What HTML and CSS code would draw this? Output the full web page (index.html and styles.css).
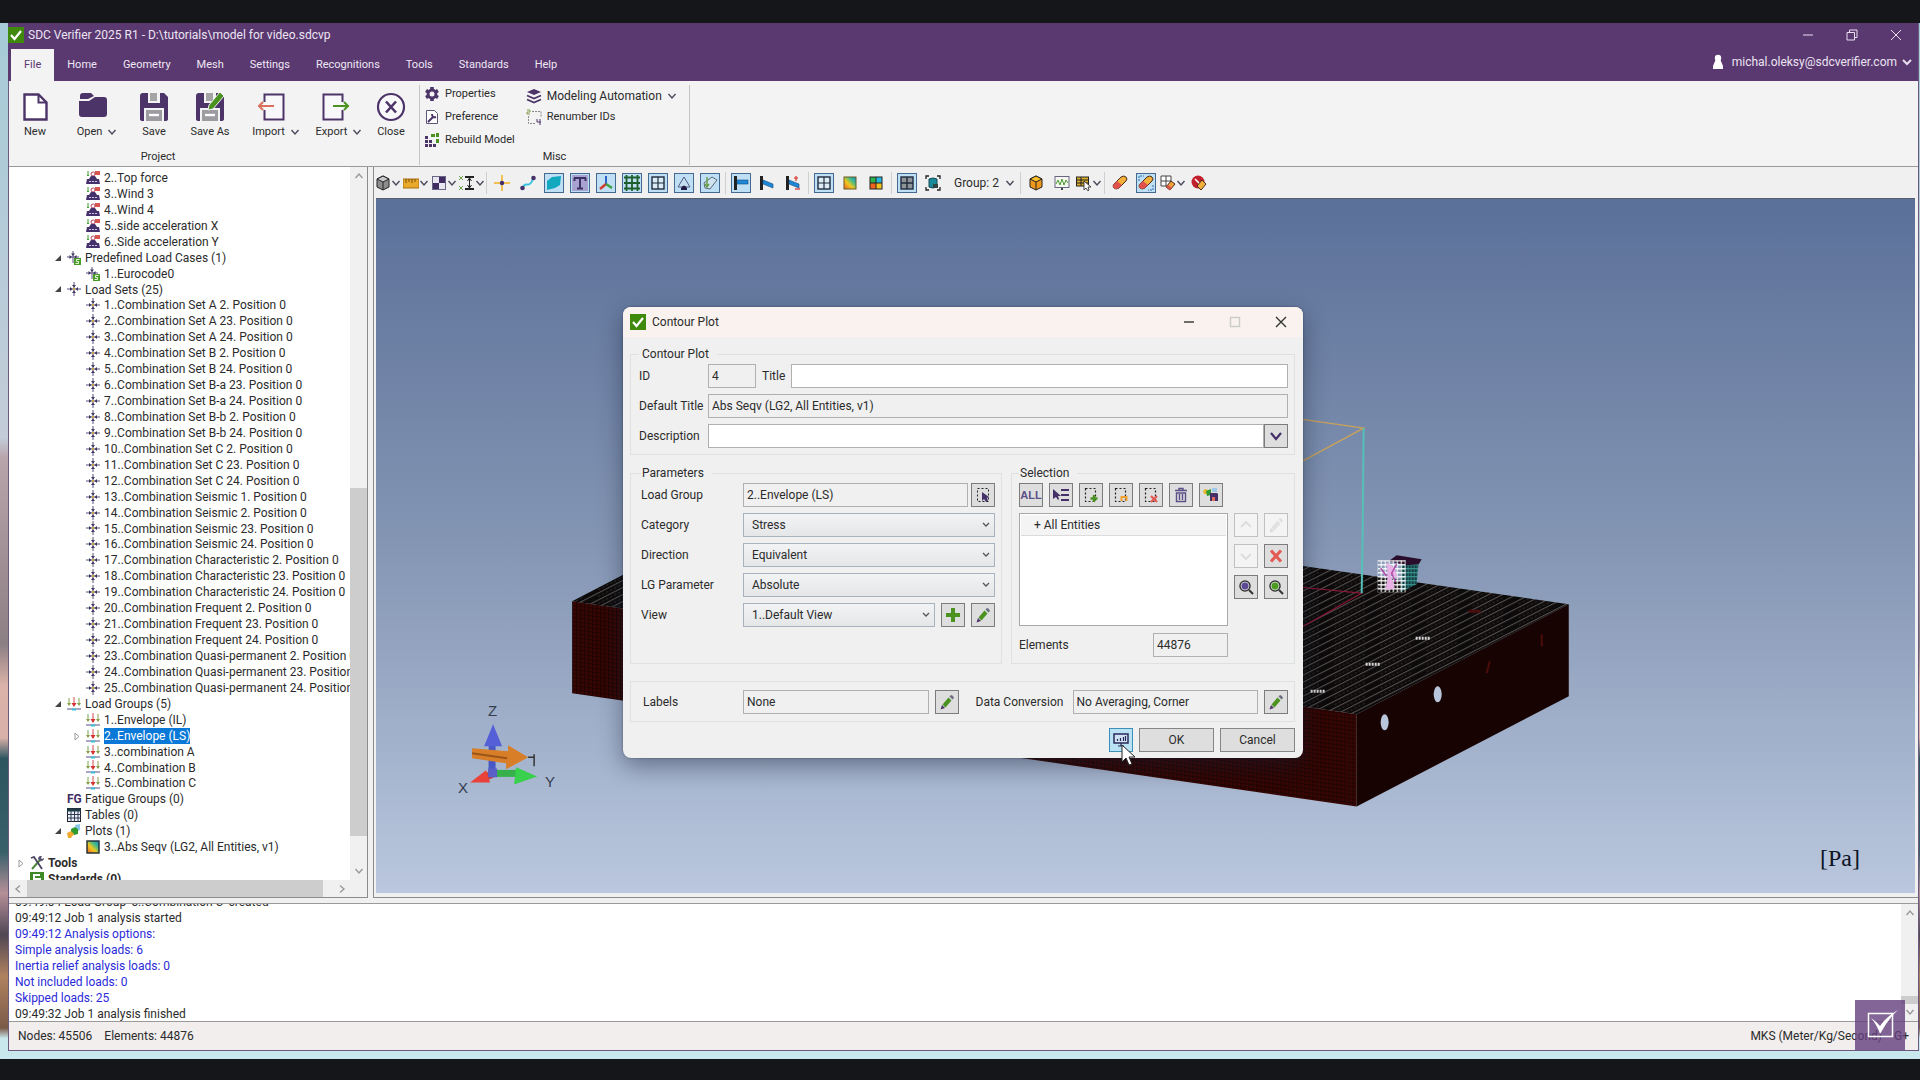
FILE: index.html
```html
<!DOCTYPE html>
<html lang="en">
<head>
<meta charset="utf-8">
<meta name="viewport" content="width=device-width, initial-scale=1">
<title>SDC Verifier 2025 R1</title>
<link rel="stylesheet" href="styles.css">
</head>
<body>
<svg class="sprite" aria-hidden="true">
  <symbol id="i-logo" viewBox="0 0 16 16"><rect width="16" height="16" fill="#3f8a0c"/><path d="M3 8l3.500 4L13 4" fill="none" stroke="#fff" stroke-width="2.200"/></symbol>
  <symbol id="i-chev" viewBox="0 0 10 10"><path d="M1.500 3L5 7l3.500-4" fill="none" stroke="#4a4a5c" stroke-width="1.400"/></symbol>
  <symbol id="i-up" viewBox="0 0 10 10"><path d="M1.500 7L5 3l3.500 4" fill="none" stroke="currentColor" stroke-width="1.400"/></symbol>
  <symbol id="i-load" viewBox="0 0 14 14"><path d="M2 0v5M1 4l1 1 1-1" stroke="#3d9b2c" fill="none"/><rect x="9" width="5" height="4" fill="#d8584f"/><circle cx="7" cy="3" r="2" fill="none" stroke="#b44a5e"/><path d="M5 5h4l2 3h2l1 5H0l1-5h2z" fill="#45316a"/><path d="M3 10.500h8" stroke="#cfc6e6" stroke-dasharray="2 1"/></symbol>
  <symbol id="i-set" viewBox="0 0 14 14"><path d="M7 0v14M0 7h14" stroke="#5a5080" fill="none"/><path d="M5 3h4L7 5.500zM5 11h4L7 8.500zM3 5v4l2.500-2zM11 5v4L8.500 7z" fill="#3e3462"/><circle cx="7" cy="7" r="1" fill="#e0b020"/></symbol>
  <symbol id="i-pre" viewBox="0 0 14 14"><path d="M6 0v12M0 6h12" stroke="#5a5080" fill="none"/><path d="M4 2.500h4L6 5zM2.500 4v4L5 6zM9.500 4v4L7 6z" fill="#3e3462"/><rect x="7" y="7" width="7" height="7" fill="#4a9a28"/><path d="M12.500 8.500h-3v2h2v2h-3" stroke="#e6f5dd" fill="none"/></symbol>
  <symbol id="i-grp" viewBox="0 0 14 14"><path d="M2 1v7M12 1v7" stroke="#84a04a" fill="none"/><path d="M0 6h4L2 9zM10 6h4l-2 3z" fill="#84a04a"/><path d="M7 0v7" stroke="#d24a4a" fill="none"/><path d="M4.500 6h5L7 10z" fill="#d22f2f"/><path d="M0 12h14" stroke="#56518c"/><path d="M5 12.500h4" stroke="#3fc0d8" stroke-width="2"/></symbol>
  <symbol id="i-tables" viewBox="0 0 14 14"><rect x=".5" y=".5" width="13" height="13" fill="#eef" stroke="#222"/><path d="M0 2h14" stroke="#1c3a46" stroke-width="3"/><path d="M0 6.500h14M0 10h14M4 0v14M7.500 0v14M11 0v14" stroke="#2d3c4a"/></symbol>
  <symbol id="i-plots" viewBox="0 0 14 14"><path d="M8 1l5-1v6l-4 2z" fill="#8cc6e8"/><path d="M4 5l4-2 3 2v5l-4 1-3-2z" fill="#2f9a30"/><path d="M0 9l4-2 3 3-3 4H1z" fill="#f0a92c"/></symbol>
  <linearGradient id="rainbow" x1="0" y1="1" x2="1" y2="0"><stop offset="0" stop-color="#e8602c"/><stop offset=".4" stop-color="#f2c81e"/><stop offset=".7" stop-color="#3dbb8a"/><stop offset="1" stop-color="#1f88d8"/></linearGradient>
  <symbol id="i-contour" viewBox="0 0 14 14"><rect x="1" y="1" width="12" height="12" fill="url(#rainbow)" stroke="#1d2a30" stroke-width="1.400"/></symbol>
  <symbol id="i-tools" viewBox="0 0 14 14"><path d="M2 13L10 4" stroke="#4c8a3a" stroke-width="2"/><path d="M8 3a3 3 0 014-3l-1 2 1 1 2-1a3 3 0 01-4 3" fill="#5a5470"/><path d="M1 2l3-1 2 3 6 9" stroke="#4a4462" stroke-width="1.800" fill="none"/></symbol>
  <symbol id="i-std" viewBox="0 0 14 14"><rect width="14" height="14" fill="#3f8a26"/><path d="M10 3H4v4h6v4H4" stroke="#fff" stroke-width="2" fill="none"/></symbol>
  <symbol id="i-open-t" viewBox="0 0 8 8"><path d="M7 1v6H1z" fill="#444"/></symbol>
  <symbol id="i-closed-t" viewBox="0 0 8 8"><path d="M2 1l4 3.500L2 8z" fill="#fff" stroke="#999"/></symbol>

  <symbol id="i-new" viewBox="0 0 30 30"><path d="M4.500 2.500h14l8 8v17h-22z" fill="#fff" stroke="#4c3468" stroke-width="2.400"/><path d="M18.500 2.500v8h8" fill="none" stroke="#4c3468" stroke-width="2"/></symbol>
  <symbol id="i-open" viewBox="0 0 30 30"><path d="M2 4q0-3 3-3h8l3 3-6 3H2z" fill="#4c3468"/><path d="M1 9h10l6-4h9q3 0 3 3v14q0 3-3 3H4q-3 0-3-3z" fill="#4c3468"/></symbol>
  <symbol id="i-save" viewBox="0 0 30 30"><path d="M1 4q0-3 3-3h21l4 4v22q0 2-3 2H4q-3 0-3-2z" fill="#4c3468"/><rect x="9" y="1" width="12" height="10" fill="#f3f3f3"/><rect x="11" y="1" width="7" height="8" fill="#a5a5a8"/><rect x="5" y="16" width="20" height="13" fill="#f3f3f3"/><rect x="7" y="18" width="16" height="11" fill="#9d9da1"/><path d="M10 23h10" stroke="#fff" stroke-width="2.400"/></symbol>
  <symbol id="i-pencil" viewBox="0 0 16 16"><path d="M3.500 10.500l6-7 3 3-6 7z" fill="#4a9320"/><path d="M10.500 2.500l1.500-1.500q2 0 3 3l-1.500 1.500z" fill="#6a6f80"/><path d="M3 11l3 3-4.500 1.500z" fill="#4c3468"/></symbol>
  <symbol id="i-saveas" viewBox="0 0 30 30"><use href="#i-save" width="30" height="30"/><path d="M13 18l1-5L25 0l4 4-11 13z" fill="#4a9320" stroke="#f3f3f3"/></symbol>
  <symbol id="i-import" viewBox="0 0 30 30"><path d="M7.500 10V2.500h19v25h-19V18" fill="#f8f8fa" stroke="#4c3468" stroke-width="2"/><path d="M2 14h15M6 10l-4 4 4 4" fill="none" stroke="#d9705c" stroke-width="2"/></symbol>
  <symbol id="i-export" viewBox="0 0 30 30"><path d="M22.500 10V2.500h-19v25h19V18" fill="#f8f8fa" stroke="#4c3468" stroke-width="2"/><path d="M13 14h15M24 10l4 4-4 4" fill="none" stroke="#4a9320" stroke-width="2"/></symbol>
  <symbol id="i-close" viewBox="0 0 30 30"><circle cx="15" cy="15" r="13" fill="#f8f8fa" stroke="#4c3468" stroke-width="2.200"/><path d="M10 9.500l10 11M20 9.500l-10 11" stroke="#4c3468" stroke-width="2.600"/></symbol>
  <symbol id="i-gear" viewBox="0 0 16 16"><path d="M8 1v14M2 4.500l12 7M14 4.500l-12 7" stroke="#4c3468" stroke-width="3.600"/><circle cx="8" cy="8" r="5.400" fill="#4c3468"/><circle cx="8" cy="8" r="2.500" fill="#f3f3f3"/></symbol>
  <symbol id="i-pref" viewBox="0 0 16 16"><path d="M2.500 1.500h8l3 3v10h-11z" fill="#fff" stroke="#5c5578"/><path d="M4 13l5-5M8 5q0 4 4 3" stroke="#4c3468" stroke-width="2" fill="none"/></symbol>
  <symbol id="i-rebuild" viewBox="0 0 16 16"><path d="M1 4h3v3H1zM1 8h3v3H1zM1 12h3v3H1zM5 8h3v3H5zM5 12h3v3H5zM9 12h3v3H9z" fill="#4c3468"/><path d="M7 2h4v3H7zM12 1h3v4h-3zM12 7h3v4h-3z" fill="#4a9320"/></symbol>
  <symbol id="i-layers" viewBox="0 0 16 16"><path d="M8 1l7 3-7 3-7-3z" fill="#4c3468"/><path d="M1 7.500l7 3 7-3M1 11.500l7 3 7-3" stroke="#4c3468" stroke-width="1.800" fill="none"/></symbol>
  <symbol id="i-renum" viewBox="0 0 16 16"><path d="M6 2.500h9v6M2.500 7v7.500H9" fill="none" stroke="#888" stroke-dasharray="2 1"/><path d="M1 1h3v2H1v2h3" fill="none" stroke="#84a04a"/><path d="M11 10v3h4M14 10v6" fill="none" stroke="#4c3468"/></symbol>
  <symbol id="i-user" viewBox="0 0 12 16"><circle cx="6" cy="4" r="3.200" fill="#fff"/><path d="M3.500 6h5l2.500 6v3H1v-3z" fill="#fff"/></symbol>

  <symbol id="t-cube" viewBox="0 0 16 16"><path d="M8 1l6 3v8l-6 3-6-3V4z" fill="#8d8d90" stroke="#222"/><path d="M8 1l6 3-6 3-6-3z" fill="#c9c9cb" stroke="#222"/><path d="M8 7v8" stroke="#222"/></symbol>
  <symbol id="t-ruler" viewBox="0 0 16 16"><rect x="0" y="4" width="16" height="9" fill="#e9a92b" stroke="#a86e10"/><path d="M3 4v4M6 4v3M9 4v4M12 4v3" stroke="#7a4d08"/></symbol>
  <symbol id="t-check" viewBox="0 0 16 16"><rect x="1.500" y="1.500" width="13" height="13" fill="#e8e6f0" stroke="#6a6584"/><path d="M8 2h6v6H8zM2 8h6v6H2z" fill="#3f2c62"/></symbol>
  <symbol id="t-span" viewBox="0 0 16 16"><path d="M0 1l4 4M4 1L0 5M0 11l4 4M4 11l-4 4" stroke="#69a04c"/><path d="M6 2h9M6 14h9" stroke="#222" stroke-width="2"/><path d="M10.500 3v10M8.500 6l2-3 2 3M8.500 10l2 3 2-3" stroke="#222" fill="none"/></symbol>
  <symbol id="t-star" viewBox="0 0 16 16"><path d="M8 0v16M0 8h16" stroke="#f0c050" stroke-width="2"/><circle cx="8" cy="8" r="2.200" fill="#45316a"/></symbol>
  <symbol id="t-curve" viewBox="0 0 16 16"><path d="M3 13c2-8 6 2 10-9" stroke="#35c3de" stroke-width="2" fill="none"/><circle cx="2.500" cy="13" r="2.300" fill="#45316a"/><circle cx="13.500" cy="3" r="2.300" fill="#45316a"/></symbol>
  <symbol id="t-surf" viewBox="0 0 16 16"><path d="M1 6l5-4 9-1-1 9-5 3-8 2z" fill="#12a9bf"/></symbol>
  <symbol id="t-text" viewBox="0 0 16 16"><rect width="16" height="16" fill="#a7a2cf"/><path d="M2 3h12M8 3v11M5 13.500h6M2.500 3v3M13.500 3v3" stroke="#3d3266" stroke-width="2"/></symbol>
  <symbol id="t-axes" viewBox="0 0 16 16"><path d="M8 9V1" stroke="#2f62c8" stroke-width="2"/><path d="M8 9l-6 5" stroke="#d23c30" stroke-width="2.400"/><path d="M8 9l6 4" stroke="#3fa040" stroke-width="2.400"/></symbol>
  <symbol id="t-mesh" viewBox="0 0 16 16"><path d="M0 2.500h16M0 8h16M0 13.500h16M2.500 0v16M8 0v16M13.500 0v16" stroke="#1c5e2c" stroke-width="1.800"/></symbol>
  <symbol id="t-grid" viewBox="0 0 16 16"><rect x="2" y="2" width="12" height="12" fill="#dcecf6" stroke="#1f2a3c" stroke-width="1.400"/><path d="M8 2v12M2 8h12" stroke="#1f2a3c" stroke-width="1.200"/></symbol>
  <symbol id="t-gridg" viewBox="0 0 16 16"><rect x="2" y="2" width="12" height="12" fill="#8f9499" stroke="#1f2a3c" stroke-width="1.400"/><path d="M8 2v12M2 8h12" stroke="#1f2a3c" stroke-width="1.400"/></symbol>
  <symbol id="t-tri" viewBox="0 0 16 16"><path d="M8 2l6 10H2z" fill="#c5dff0" stroke="#52608a"/><path d="M5 13q3-5 6 0v2H5z" fill="#221c44"/></symbol>
  <symbol id="t-tag" viewBox="0 0 16 16"><path d="M2 8l8-6 5 3-7 9-5-1z" fill="#cfe4ee" stroke="#5c6a78"/><path d="M5 2v9M3 9l2 3 2-3" fill="none" stroke="#69a04c" stroke-width="1.500"/></symbol>
  <symbol id="t-beam" viewBox="0 0 16 16"><path d="M2.500 1v14" stroke="#222" stroke-width="3"/><path d="M4 5h11v4H4z" fill="#1e88d8" stroke="#174a78" stroke-width=".6"/></symbol>
  <symbol id="t-beam2" viewBox="0 0 16 16"><path d="M2.500 1v14" stroke="#222" stroke-width="3"/><path d="M4 5l10 4v4L4 9z" fill="#1e88d8" stroke="#174a78" stroke-width=".6"/></symbol>
  <symbol id="t-beam3" viewBox="0 0 16 16"><use href="#t-beam2" width="16" height="16"/><path d="M9 3h4M11 1v5M10 14h5" stroke="#d9534f" stroke-width="1.500"/></symbol>
  <symbol id="t-cont" viewBox="0 0 16 16"><rect x="2" y="2" width="12" height="12" fill="url(#rainbow)" stroke="#6b5a20"/></symbol>
  <symbol id="t-four" viewBox="0 0 16 16"><rect x="1.500" y="1.500" width="13" height="13" fill="#222"/><path d="M2.500 2.500h5v5h-5z" fill="#29b34a"/><path d="M8.500 2.500h5v5h-5z" fill="#24b8e0"/><path d="M2.500 8.500h5v5h-5z" fill="#f0641e"/><path d="M8.500 8.500h5v5h-5z" fill="#f4c21e"/></symbol>
  <symbol id="t-solid" viewBox="0 0 16 16"><path d="M1 4V1h3M12 1h3v3M1 12v3h3M12 15h3v-3" fill="none" stroke="#222" stroke-width="1.300"/><path d="M4 4q4-2 8 0v8q-4 2-8 0z" fill="#1a8a9a" stroke="#124a58"/><path d="M8 9h5v4H8z" fill="#344"/></symbol>
  <symbol id="t-ocube" viewBox="0 0 16 16"><path d="M8 1l6 3v8l-6 3-6-3V4z" fill="#f0981e" stroke="#222"/><path d="M8 1l6 3-6 3-6-3z" fill="#f8c02c" stroke="#222"/><path d="M8 7v8" stroke="#222"/></symbol>
  <symbol id="t-chart" viewBox="0 0 16 16"><rect x="1" y="1.500" width="14" height="11" fill="#f4f8f0" stroke="#6a6584"/><path d="M2 9l2-4 2 5 2-6 2 6 2-5 2 3" fill="none" stroke="#4a9b30"/><path d="M8 13v2" stroke="#444" stroke-width="2"/></symbol>
  <symbol id="t-pick" viewBox="0 0 16 16"><rect x=".5" y="2" width="12" height="9" fill="#d8ae2c" stroke="#222"/><path d="M1 5h12M1 8h12M5 2v9" stroke="#222"/><path d="M8 6v9l2-2 2 3 1-1-1-3h3z" fill="#fff" stroke="#222" stroke-width=".8"/></symbol>
  <symbol id="t-eraser" viewBox="0 0 16 16"><path d="M9 2q3-2 5 0t0 4l-7 7q-3 2-5 0t0-4z" fill="#f2b03a" stroke="#4a2c20"/><path d="M5 6l5 4-3 3q-3 2-5 0t0-4z" fill="#e0524c"/></symbol>
  <symbol id="t-aeraser" viewBox="0 0 16 16"><path d="M1 6V1h5M15 10v5h-5" fill="none" stroke="#2f6ea8" stroke-dasharray="2 1"/><use href="#t-eraser" width="16" height="16"/></symbol>
  <symbol id="t-geraser" viewBox="0 0 16 16"><path d="M1 1h10v10H1zM6 1v10M1 6h10" fill="#fff" stroke="#444"/><path d="M11 6l4 3-5 6-4-3z" fill="#f2a03a" stroke="#4a2c20"/><path d="M8 10l4 3-2 2-4-3z" fill="#e0524c"/></symbol>
  <symbol id="t-reraser" viewBox="0 0 16 16"><circle cx="7" cy="7" r="6.500" fill="#c2202c"/><path d="M4 4l6 6" stroke="#fff" stroke-width="1.500"/><path d="M11 5l4 4-5 6-4-4z" fill="#f2b03a" stroke="#4a2c20"/></symbol>

  <symbol id="d-pick" viewBox="0 0 16 16"><path d="M2.500 1.500h11v13h-11z" fill="none" stroke="#222" stroke-dasharray="2 2"/><path d="M7 5v9l2-2 2 3 2-1-1-3 2-1z" fill="#45316a"/></symbol>
  <symbol id="d-sel" viewBox="0 0 16 16"><path d="M2.500 1.500h10v13h-10z" fill="none" stroke="#222" stroke-width="1.200" stroke-dasharray="2 2"/></symbol>
  <symbol id="d-tree" viewBox="0 0 16 16"><path d="M0 2v10l3-2 2 3 1-1-1-3h3z" fill="#45316a"/><path d="M8 3h8M8 8h8M8 13h8" stroke="#45316a" stroke-width="2"/></symbol>
  <symbol id="d-trash" viewBox="0 0 16 16"><path d="M2 3.500h12M6 3V1.500h4V3M3.500 6h9v8.500h-9zM6.500 7v6M9.500 7v6" fill="none" stroke="#5c5088" stroke-width="1.400"/></symbol>
  <symbol id="d-disk" viewBox="0 0 16 16"><path d="M0 4q3-4 5 0v3H1z" fill="#e8b92c"/><path d="M3 4l5-2v6l-4 1z" fill="#2f9a30"/><path d="M9 1h5v4H9z" fill="#9fc9e8"/><path d="M7 6h7l1 1v7H7z" fill="#45316a"/><path d="M9 10h3v4H9z" fill="#e06a5c"/></symbol>
  <symbol id="d-lensp" viewBox="0 0 16 16"><circle cx="7" cy="7" r="5" fill="#5c4a94" stroke="#333" stroke-width="1.500"/><circle cx="7" cy="7" r="4" fill="none" stroke="#ddd" stroke-width=".8"/><path d="M11 11l4 4" stroke="#333" stroke-width="2"/></symbol>
  <symbol id="d-lensg" viewBox="0 0 16 16"><circle cx="7" cy="7" r="5" fill="#4a9b20" stroke="#333" stroke-width="1.500"/><circle cx="7" cy="7" r="4" fill="none" stroke="#ddd" stroke-width=".8"/><path d="M11 11l4 4" stroke="#333" stroke-width="2"/></symbol>
  <symbol id="d-x" viewBox="0 0 16 16"><path d="M3 2.500l10 11M13 2.500l-10 11" stroke="#e25a52" stroke-width="3"/></symbol>
  <symbol id="d-plus" viewBox="0 0 16 16"><path d="M8 1v14M1 8h14" stroke="#4a9320" stroke-width="4"/></symbol>
  <symbol id="d-screen" viewBox="0 0 16 16"><rect x="1" y="2" width="14" height="9" fill="#cfe2f4" stroke="#2a2a58" stroke-width="1.500"/><path d="M4.500 9V7M7.500 9V6M10.500 9V5M12.500 9V4M8 11v3M5 14h6" stroke="#2a2a58" stroke-width="1.200"/></symbol>
</svg>

<div class="letterbox top"></div>
<div class="desktop">
<main class="window">
  <header class="caption">
    <div class="titlebar">
      <svg class="logo"><use href="#i-logo"/></svg>
      <h1>SDC Verifier 2025 R1 - D:\tutorials\model for video.sdcvp</h1>
      <div class="winbtns">
        <button aria-label="Minimize"><svg viewBox="0 0 12 12"><path d="M1 6h10"/></svg></button>
        <button aria-label="Restore"><svg viewBox="0 0 12 12"><path d="M1 3.500h7.500V11H1zM3.500 3.500v-2.500H11v7.500H8.500"/></svg></button>
        <button aria-label="Close"><svg viewBox="0 0 12 12"><path d="M1 1l10 10M11 1L1 11"/></svg></button>
      </div>
    </div>
    <div class="tabrow">
      <nav class="tabs">
        <a href="#file" class="active">File</a><a href="#home">Home</a><a href="#geometry">Geometry</a><a href="#mesh">Mesh</a><a href="#settings">Settings</a><a href="#recognitions">Recognitions</a><a href="#tools">Tools</a><a href="#standards">Standards</a><a href="#help">Help</a>
      </nav>
      <button class="account"><svg class="person"><use href="#i-user"/></svg>michal.oleksy@sdcverifier.com<svg class="chev light" viewBox="0 0 10 10"><path d="M1 3l4 4 4-4"/></svg></button>
    </div>
  </header>

  <section class="ribbon" id="file">
    <div class="group project">
      <div class="big-buttons">
        <button><svg><use href="#i-new"/></svg><span>New</span></button>
        <button><svg><use href="#i-open"/></svg><span class="more">Open <svg class="chev"><use href="#i-chev"/></svg></span></button>
        <button><svg><use href="#i-save"/></svg><span>Save</span></button>
        <button><svg><use href="#i-saveas"/></svg><span>Save As</span></button>
        <button><svg><use href="#i-import"/></svg><span class="more">Import <svg class="chev"><use href="#i-chev"/></svg></span></button>
        <button><svg><use href="#i-export"/></svg><span class="more">Export <svg class="chev"><use href="#i-chev"/></svg></span></button>
        <button><svg><use href="#i-close"/></svg><span>Close</span></button>
      </div>
      <div class="caption-text">Project</div>
    </div>
    <div class="group misc">
      <div class="small-buttons">
        <div class="col">
          <button><svg><use href="#i-gear"/></svg>Properties</button>
          <button><svg><use href="#i-pref"/></svg>Preference</button>
          <button><svg><use href="#i-rebuild"/></svg>Rebuild Model</button>
        </div>
        <div class="col second">
          <button class="wide"><svg><use href="#i-layers"/></svg>Modeling Automation<svg class="chev"><use href="#i-chev"/></svg></button>
          <button><svg><use href="#i-renum"/></svg>Renumber IDs</button>
        </div>
      </div>
      <div class="caption-text">Misc</div>
    </div>
  </section>

  <div class="work">
    <aside class="tree">
      <ul class="rows">
        <li class="l2"><svg><use href="#i-load"/></svg><span>2..Top force</span></li>
        <li class="l2"><svg><use href="#i-load"/></svg><span>3..Wind 3</span></li>
        <li class="l2"><svg><use href="#i-load"/></svg><span>4..Wind 4</span></li>
        <li class="l2"><svg><use href="#i-load"/></svg><span>5..side acceleration X</span></li>
        <li class="l2"><svg><use href="#i-load"/></svg><span>6..Side acceleration Y</span></li>
        <li class="l1"><svg class="tog"><use href="#i-open-t"/></svg><svg><use href="#i-pre"/></svg><span>Predefined Load Cases (1)</span></li>
        <li class="l2"><svg><use href="#i-pre"/></svg><span>1..Eurocode0</span></li>
        <li class="l1"><svg class="tog"><use href="#i-open-t"/></svg><svg><use href="#i-set"/></svg><span>Load Sets (25)</span></li>
        <li class="l2"><svg><use href="#i-set"/></svg><span>1..Combination Set A 2. Position 0</span></li>
        <li class="l2"><svg><use href="#i-set"/></svg><span>2..Combination Set A 23. Position 0</span></li>
        <li class="l2"><svg><use href="#i-set"/></svg><span>3..Combination Set A 24. Position 0</span></li>
        <li class="l2"><svg><use href="#i-set"/></svg><span>4..Combination Set B 2. Position 0</span></li>
        <li class="l2"><svg><use href="#i-set"/></svg><span>5..Combination Set B 24. Position 0</span></li>
        <li class="l2"><svg><use href="#i-set"/></svg><span>6..Combination Set B-a 23. Position 0</span></li>
        <li class="l2"><svg><use href="#i-set"/></svg><span>7..Combination Set B-a 24. Position 0</span></li>
        <li class="l2"><svg><use href="#i-set"/></svg><span>8..Combination Set B-b 2. Position 0</span></li>
        <li class="l2"><svg><use href="#i-set"/></svg><span>9..Combination Set B-b 24. Position 0</span></li>
        <li class="l2"><svg><use href="#i-set"/></svg><span>10..Combination Set C 2. Position 0</span></li>
        <li class="l2"><svg><use href="#i-set"/></svg><span>11..Combination Set C 23. Position 0</span></li>
        <li class="l2"><svg><use href="#i-set"/></svg><span>12..Combination Set C 24. Position 0</span></li>
        <li class="l2"><svg><use href="#i-set"/></svg><span>13..Combination Seismic 1. Position 0</span></li>
        <li class="l2"><svg><use href="#i-set"/></svg><span>14..Combination Seismic 2. Position 0</span></li>
        <li class="l2"><svg><use href="#i-set"/></svg><span>15..Combination Seismic 23. Position 0</span></li>
        <li class="l2"><svg><use href="#i-set"/></svg><span>16..Combination Seismic 24. Position 0</span></li>
        <li class="l2"><svg><use href="#i-set"/></svg><span>17..Combination Characteristic 2. Position 0</span></li>
        <li class="l2"><svg><use href="#i-set"/></svg><span>18..Combination Characteristic 23. Position 0</span></li>
        <li class="l2"><svg><use href="#i-set"/></svg><span>19..Combination Characteristic 24. Position 0</span></li>
        <li class="l2"><svg><use href="#i-set"/></svg><span>20..Combination Frequent 2. Position 0</span></li>
        <li class="l2"><svg><use href="#i-set"/></svg><span>21..Combination Frequent 23. Position 0</span></li>
        <li class="l2"><svg><use href="#i-set"/></svg><span>22..Combination Frequent 24. Position 0</span></li>
        <li class="l2"><svg><use href="#i-set"/></svg><span>23..Combination Quasi-permanent 2. Position 0</span></li>
        <li class="l2"><svg><use href="#i-set"/></svg><span>24..Combination Quasi-permanent 23. Position 0</span></li>
        <li class="l2"><svg><use href="#i-set"/></svg><span>25..Combination Quasi-permanent 24. Position 0</span></li>
        <li class="l1"><svg class="tog"><use href="#i-open-t"/></svg><svg><use href="#i-grp"/></svg><span>Load Groups (5)</span></li>
        <li class="l2"><svg><use href="#i-grp"/></svg><span>1..Envelope (IL)</span></li>
        <li class="l2 has-toggle"><svg class="tog"><use href="#i-closed-t"/></svg><svg><use href="#i-grp"/></svg><span class="selected">2..Envelope (LS)</span></li>
        <li class="l2"><svg><use href="#i-grp"/></svg><span>3..combination A</span></li>
        <li class="l2"><svg><use href="#i-grp"/></svg><span>4..Combination B</span></li>
        <li class="l2"><svg><use href="#i-grp"/></svg><span>5..Combination C</span></li>
        <li class="l1 no-toggle"><b class="fg">FG</b><span>Fatigue Groups (0)</span></li>
        <li class="l1 no-toggle"><svg><use href="#i-tables"/></svg><span>Tables (0)</span></li>
        <li class="l1"><svg class="tog"><use href="#i-open-t"/></svg><svg><use href="#i-plots"/></svg><span>Plots (1)</span></li>
        <li class="l2"><svg><use href="#i-contour"/></svg><span>3..Abs Seqv (LG2, All Entities, v1)</span></li>
        <li class="l0"><svg class="tog"><use href="#i-closed-t"/></svg><svg><use href="#i-tools"/></svg><span>Tools</span></li>
        <li class="l0 no-toggle"><svg><use href="#i-std"/></svg><span>Standards (0)</span></li>
      </ul>
      <div class="vbar"><svg><use href="#i-up"/></svg><i></i><svg class="down"><use href="#i-up"/></svg></div>
      <div class="hbar"><svg class="left"><use href="#i-up"/></svg><i></i><svg class="right"><use href="#i-up"/></svg></div>
    </aside>

    <section class="view">
      <div class="toolbar">
        <div class="drops">
          <button class="drop" aria-label="View cube"><svg><use href="#t-cube"/></svg><svg class="chev"><use href="#i-chev"/></svg></button>
          <button class="drop" aria-label="Measure"><svg><use href="#t-ruler"/></svg><svg class="chev"><use href="#i-chev"/></svg></button>
          <button class="drop" aria-label="Background"><svg><use href="#t-check"/></svg><svg class="chev"><use href="#i-chev"/></svg></button>
          <button class="drop" aria-label="Dimensions"><svg><use href="#t-span"/></svg><svg class="chev"><use href="#i-chev"/></svg></button>
        </div>
        <hr>
        <button aria-label="Points"><svg><use href="#t-star"/></svg></button>
        <button aria-label="Curves"><svg><use href="#t-curve"/></svg></button>
        <button class="on" aria-label="Surfaces"><svg><use href="#t-surf"/></svg></button>
        <button class="on" aria-label="Text"><svg><use href="#t-text"/></svg></button>
        <button class="on" aria-label="Axes"><svg><use href="#t-axes"/></svg></button>
        <button class="on" aria-label="Mesh"><svg><use href="#t-mesh"/></svg></button>
        <button class="on" aria-label="Elements"><svg><use href="#t-grid"/></svg></button>
        <button class="on" aria-label="Constraints"><svg><use href="#t-tri"/></svg></button>
        <button class="on" aria-label="Loads"><svg><use href="#t-tag"/></svg></button>
        <hr>
        <button class="on" aria-label="Beam"><svg><use href="#t-beam"/></svg></button>
        <button aria-label="Deformed"><svg><use href="#t-beam2"/></svg></button>
        <button aria-label="Animate"><svg><use href="#t-beam3"/></svg></button>
        <hr>
        <button class="on" aria-label="No contour"><svg><use href="#t-grid"/></svg></button>
        <button aria-label="Contour"><svg><use href="#t-cont"/></svg></button>
        <button aria-label="Criteria"><svg><use href="#t-four"/></svg></button>
        <hr>
        <button class="on" aria-label="Fill"><svg><use href="#t-gridg"/></svg></button>
        <button aria-label="Fit"><svg><use href="#t-solid"/></svg></button>
        <button class="combo">Group: 2<svg class="chev"><use href="#i-chev"/></svg></button>
        <hr>
        <button aria-label="Solid"><svg><use href="#t-ocube"/></svg></button>
        <button aria-label="Chart"><svg><use href="#t-chart"/></svg></button>
        <button class="drop" aria-label="Pick"><svg><use href="#t-pick"/></svg><svg class="chev"><use href="#i-chev"/></svg></button>
        <hr>
        <button aria-label="Erase"><svg><use href="#t-eraser"/></svg></button>
        <button class="on" aria-label="Auto erase"><svg><use href="#t-aeraser"/></svg></button>
        <button class="drop" aria-label="Erase mesh"><svg><use href="#t-geraser"/></svg><svg class="chev"><use href="#i-chev"/></svg></button>
        <button aria-label="Erase all"><svg><use href="#t-reraser"/></svg></button>
      </div>
      <div class="canvas">
        <svg class="scene" viewBox="376 199 1538 694" preserveAspectRatio="xMinYMin slice">
          <defs>
            <pattern id="deck" width="46" height="7" patternUnits="userSpaceOnUse" patternTransform="skewY(-27)">
              <rect width="46" height="7" fill="#0c0a0a"/>
              <path d="M0 1.500h46" stroke="#6e6864"/><path d="M0 5h30" stroke="#3a3431" stroke-dasharray="2 2"/>
            </pattern>
            <pattern id="hull" width="4" height="4" patternUnits="userSpaceOnUse" patternTransform="skewY(8)">
              <rect width="4" height="4" fill="#3a0603"/><path d="M0 .5h4M.5 0v4" stroke="#1d0503"/>
            </pattern>
            <pattern id="cell" width="4" height="4" patternUnits="userSpaceOnUse"><path d="M0 .5h4M.5 0v4" stroke="#fff" stroke-width="1.200"/></pattern>
            <pattern id="cellt" width="3" height="4" patternUnits="userSpaceOnUse"><rect width="3" height="4" fill="#123c40"/><path d="M0 .5h3M.5 0v4" stroke="#3f9c98" stroke-width=".8"/></pattern>
          </defs>
          <path d="M572 601L784 491 1568 604 1356 714z" fill="url(#deck)"/>
          <path d="M572 601L1356 714V806L572 693z" fill="url(#hull)"/>
          <path d="M1356 714L1568 604V696L1356 806z" fill="#170402"/>
          <path d="M1300 587l61 6-60 34" fill="none" stroke="#8c1838" stroke-width="1.200"/>
          <path d="M1300 419l63 9-63 34" fill="none" stroke="#c8a35a" stroke-width="1.400"/>
          <path d="M1363 428l-1 106-1 59" fill="none" stroke="#55c0b8" stroke-width="2"/>
          <path d="M1400 562h18l-2 22-16 8z" fill="url(#cellt)"/>
          <path d="M1388 561l8-6 25 4-3 5-12 1z" fill="#2a0d2c"/>
          <rect x="1377" y="560" width="28" height="32" fill="url(#cell)"/>
          <path d="M1386 562l8 6 3 10-7-4 4 14-9 2 2-14z" fill="#e9b0e6"/>
          <path d="M1380 568l6 8M1396 564l-5 9 4 9" stroke="#b04aa8" stroke-width="1.500" fill="none"/>
          <g stroke="#d8d8d8" stroke-width="3" stroke-dasharray="2 1"><path d="M1415 638h15M1365 664h15M1310 691h15"/></g>
          <g fill="#b9c5da"><ellipse cx="1384" cy="722" rx="4" ry="8"/><ellipse cx="1437" cy="694" rx="4" ry="8"/></g>
          <path d="M1486 673l3-12M1541 634v12" stroke="#4a0d0a" stroke-width="2"/>
          <path d="M1468 611h12" stroke="#4a0d0c" stroke-width="3"/>
          <g>
            <path d="M492 772V738" stroke="#4858c4" stroke-width="7"/><path d="M493 724l-9 22h18z" fill="#5560d8"/>
            <path d="M495 773h22" stroke="#35b04a" stroke-width="7"/><path d="M537 776l-23 8 2-17z" fill="#38d04c"/>
            <path d="M492 774l-10 4" stroke="#c83c34" stroke-width="7"/><path d="M470 782l16-12 4 12z" fill="#e8423a"/>
            <path d="M472 748l36 3v-6l20 12-22 12v-6l-34-5z" fill="#d87e28"/><path d="M472 753l35 5" stroke="#9a5618" stroke-width="2"/>
            <path d="M528 757h6M534 754v12" stroke="#333" stroke-width="1.500"/>
            <rect x="488" y="768" width="9" height="9" fill="#5a5fc8"/>
          </g>
          <g class="axis-names"><text x="488" y="716">Z</text><text x="545" y="787">Y</text><text x="458" y="793">X</text></g>
          <text class="unit" x="1819" y="866">[Pa]</text>
        </svg>

        <form class="dialog" role="dialog" aria-label="Contour Plot">
          <div class="dlg-title">
            <svg class="logo"><use href="#i-logo"/></svg><h2>Contour Plot</h2>
            <button type="button" aria-label="Minimize dialog"><svg viewBox="0 0 12 12"><path d="M1 6h10"/></svg></button>
            <button type="button" aria-label="Maximize dialog" disabled><svg viewBox="0 0 12 12"><rect x="1.500" y="1.500" width="9" height="9"/></svg></button>
            <button type="button" aria-label="Close dialog"><svg viewBox="0 0 12 12"><path d="M1 1l10 10M11 1L1 11"/></svg></button>
          </div>
          <fieldset class="head">
            <legend>Contour Plot</legend>
            <div class="line"><label for="pid">ID</label><input id="pid" class="short" value="4" readonly><label for="ptitle" class="inline">Title</label><input id="ptitle" class="open"></div>
            <div class="line"><label for="pdef">Default Title</label><input id="pdef" value="Abs Seqv (LG2, All Entities, v1)" readonly></div>
            <div class="line"><label for="pdesc">Description</label><div class="joined"><input id="pdesc" class="open"><button type="button" class="sq" aria-label="Expand description"><svg viewBox="0 0 16 16"><path d="M3 5l5 6 5-6" fill="none" stroke="#45316a" stroke-width="2.200"/></svg></button></div></div>
          </fieldset>
          <div class="pair">
            <fieldset class="params">
              <legend>Parameters</legend>
              <div class="line tight"><label for="lg">Load Group</label><input id="lg" value="2..Envelope (LS)" readonly><button type="button" class="sq" aria-label="Pick load group"><svg><use href="#d-pick"/></svg></button></div>
              <div class="line"><label for="cat">Category</label><select id="cat"><option>Stress</option></select></div>
              <div class="line"><label for="dir">Direction</label><select id="dir"><option>Equivalent</option></select></div>
              <div class="line"><label for="lgp">LG Parameter</label><select id="lgp"><option>Absolute</option></select></div>
              <div class="line"><label for="vw">View</label><select id="vw"><option>1..Default View</option></select><button type="button" class="sq" aria-label="Add view"><svg><use href="#d-plus"/></svg></button><button type="button" class="sq" aria-label="Edit view"><svg><use href="#i-pencil"/></svg></button></div>
            </fieldset>
            <fieldset class="selection">
              <legend>Selection</legend>
              <div class="line">
                <button type="button" class="sq all">ALL</button>
                <button type="button" class="sq" aria-label="From tree"><svg><use href="#d-tree"/></svg></button>
                <button type="button" class="sq" aria-label="Add selected"><svg viewBox="0 0 16 16"><use href="#d-sel" width="16" height="16"/><path d="M11 8v7M7.500 11.500h7" stroke="#4a9320" stroke-width="2.400"/></svg></button>
                <button type="button" class="sq" aria-label="Intersect selected"><svg viewBox="0 0 16 16"><use href="#d-sel" width="16" height="16"/><path d="M8.500 14v-4h5v4" fill="none" stroke="#f0a030" stroke-width="2"/></svg></button>
                <button type="button" class="sq" aria-label="Remove selected"><svg viewBox="0 0 16 16"><use href="#d-sel" width="16" height="16"/><path d="M8 9l6 6M14 9l-6 6" stroke="#e25a52" stroke-width="2.200"/></svg></button>
                <button type="button" class="sq" aria-label="Clear"><svg><use href="#d-trash"/></svg></button>
                <button type="button" class="sq" aria-label="Save selection"><svg><use href="#d-disk"/></svg></button>
              </div>
              <div class="listrow">
                <ul class="listbox"><li>+ All Entities</li></ul>
                <div class="actions">
                  <button type="button" class="sq" disabled aria-label="Move up"><svg viewBox="0 0 16 16"><path d="M3 10l5-5 5 5" fill="none" stroke="#ddd" stroke-width="2"/></svg></button>
                  <button type="button" class="sq" disabled aria-label="Edit"><svg class="faint"><use href="#i-pencil"/></svg></button>
                  <button type="button" class="sq" disabled aria-label="Move down"><svg viewBox="0 0 16 16"><path d="M3 6l5 5 5-5" fill="none" stroke="#ddd" stroke-width="2"/></svg></button>
                  <button type="button" class="sq" aria-label="Delete"><svg><use href="#d-x"/></svg></button>
                  <button type="button" class="sq" aria-label="Preview"><svg><use href="#d-lensp"/></svg></button>
                  <button type="button" class="sq" aria-label="Preview all"><svg><use href="#d-lensg"/></svg></button>
                </div>
              </div>
              <div class="line count"><label for="els">Elements</label><input id="els" value="44876" readonly></div>
            </fieldset>
          </div>
          <div class="extra">
            <label for="lab">Labels</label><input id="lab" value="None" readonly><button type="button" class="sq" aria-label="Edit labels"><svg><use href="#i-pencil"/></svg></button>
            <label for="conv">Data Conversion</label><input id="conv" value="No Averaging, Corner" readonly><button type="button" class="sq" aria-label="Edit conversion"><svg><use href="#i-pencil"/></svg></button>
          </div>
          <div class="footer">
            <button type="button" class="sq hot" aria-label="Show plot"><svg><use href="#d-screen"/></svg></button>
            <button type="button" class="push">OK</button>
            <button type="button" class="push">Cancel</button>
          </div>
          <svg class="pointer" viewBox="0 0 16 22"><path d="M1 1v17l4-4 3 7 3-1-3-7h6z" fill="#fff" stroke="#222"/></svg>
        </form>
      </div>
    </section>
  </div>

  <section class="log">
    <div class="lines">
      <p>09:49:04 Load Group '5..Combination C' created</p>
      <p>09:49:12 Job 1 analysis started</p>
      <p class="info">09:49:12 Analysis options:</p>
      <p class="info">Simple analysis loads: 6</p>
      <p class="info">Inertia relief analysis loads: 0</p>
      <p class="info">Not included loads: 0</p>
      <p class="info">Skipped loads: 25</p>
      <p>09:49:32 Job 1 analysis finished</p>
    </div>
    <div class="vbar"><svg><use href="#i-up"/></svg><i></i><svg class="down"><use href="#i-up"/></svg></div>
  </section>
  <footer class="status"><span>Nodes: 45506</span><span>Elements: 44876</span><span class="units">MKS (Meter/Kg/Second)</span><span>G+</span></footer>
  <div class="badge"><svg viewBox="0 0 50 50"><path d="M13.500 13.500h24v23h-24z" fill="none" stroke="#fff" stroke-width="1.500"/><path d="M16 18q6 4 9 8 7-10 18-16-10 9-18 24-3-9-9-16z" fill="#fff"/></svg></div>
</main>
</div>
<div class="letterbox bottom"></div>
</body>
</html>
```
FILE: styles.css
```css
* { box-sizing: border-box; }
body {
  margin: 0;
  height: 100vh;
  display: flex;
  flex-direction: column;
  overflow: hidden;
  font: 12px/16px Roboto, "Open Sans", sans-serif;
  color: #2b2b2b;
  background: #141619;
}
button, input, select { font: inherit; color: inherit; margin: 0; }
button { padding: 0; border: 0; background: none; white-space: nowrap; }
h1, h2, p, ul { margin: 0; padding: 0; font: inherit; list-style: none; }
svg { display: block; flex: none; }
.sprite { position: absolute; width: 0; height: 0; }

.letterbox.top { height: 23px; flex: none; }
.letterbox.bottom { height: 21px; flex: none; }
.desktop {
  flex: 1;
  min-height: 0;
  display: flex;
  padding: 0 1px 8px 8px;
  background:
    linear-gradient(#c8e8ed, #c8e8ed) bottom / 100% 8px no-repeat,
    linear-gradient(#a6cbd8, #c3ccd8 40%, #b8a4ab 42%, #8c7f84 60%, #dcb3a8 64%, #d8b0a8 69%, #2d5560 71%, #37606a 80%, #b58f98 84%, #4f4754 88%, #b0825f 92%, #7a5a48 97%, #c8e8ed 98%);
}
.window {
  position: relative;
  flex: 1;
  min-width: 0;
  display: flex;
  flex-direction: column;
  background: #f0f0f0;
  border: solid #6b5a80;
  border-width: 0 1px 1px;
}

/* caption and tabs */
.caption { background: #5a3870; color: #ece4f2; margin-left: -1px; }
.titlebar { display: flex; align-items: center; height: 24px; gap: 4px; }
.logo { width: 16px; height: 16px; }
.titlebar h1 { flex: 1; }
.winbtns { display: flex; }
.winbtns button { width: 44px; height: 24px; display: grid; place-items: center; }
.winbtns svg { width: 12px; height: 12px; fill: none; stroke: #e8def0; }
.tabrow { display: flex; height: 34px; align-items: center; justify-content: space-between; }
.tabs { display: flex; align-self: stretch; align-items: flex-end; padding-left: 3px; font-size: 11px; }
.tabs a { padding: 0 13px; line-height: 32px; color: #efe8f4; text-decoration: none; }
.tabs .active { background: #f3f3f3; color: #5a3870; }
.account { display: flex; align-items: center; gap: 8px; padding-right: 6px; margin-bottom: 4px; }
.person { width: 12px; height: 16px; }
.chev { width: 10px; height: 10px; }
.account .chev { margin-left: -3px; }
.light { fill: none; stroke: #e8def0; stroke-width: 2; }

/* ribbon */
.ribbon { display: flex; height: 86px; background: #f3f3f3; border-bottom: 1px solid #9a9a9a; font-size: 11px; }
.group { display: flex; flex-direction: column; justify-content: space-between; margin: 4px 0 1px; border-right: 1px solid #c4c4c4; }
.big-buttons { display: grid; grid-template-columns: 52px 64px 58px 54px 70px 56px 56px; padding-top: 7px; }
.big-buttons button { display: flex; flex-direction: column; align-items: center; gap: 2px; }
.big-buttons button > svg { width: 30px; height: 30px; }
.big-buttons span { display: flex; align-items: center; gap: 5px; }
.big-buttons .more { padding-left: 8px; }
.caption-text { text-align: center; }
.project .caption-text { padding-right: 112px; }
.small-buttons { display: flex; gap: 11px; padding: 1px 0 0 4px; }
.col { display: flex; flex-direction: column; gap: 7px; }
.second { gap: 5px; padding-top: 2px; }
.col button { display: flex; align-items: center; gap: 5px; }
.col button > svg:first-child { width: 16px; height: 16px; }
.col .wide { font-size: 12px; }
.misc { width: 270px; }

/* model tree */
.work { flex: 1; min-height: 0; display: flex; gap: 5px; }
.tree {
  width: 359px;
  display: grid;
  grid-template: minmax(0, 1fr) 17px / minmax(0, 1fr) 17px;
  background: #fff;
  border-right: 1px solid #8c8c8c;
  border-bottom: 1px solid #8c8c8c;
  overflow: hidden;
  contain: content;
}
.rows { overflow: hidden; padding-top: 3px; display: grid; grid-template-rows: repeat(45, 1fr); height: 720px; }
.rows li { display: flex; align-items: center; gap: 4px; white-space: nowrap; min-height: 0; }
.rows svg { width: 14px; height: 14px; }
.rows .tog { width: 8px; height: 8px; margin-right: 1px; }
.l0 { padding-left: 8px; font-weight: 700; }
.l0.no-toggle { padding-left: 21px; }
.l1 { padding-left: 45px; }
.l1.no-toggle { padding-left: 58px; }
.l2 { padding-left: 77px; }
.l2.has-toggle { padding-left: 64px; }
.fg { width: 14px; color: #3f2f66; }
.selected { background: #0a78d7; color: #fff; }
.vbar, .hbar { background: #f0f0f0; display: flex; align-items: center; color: #9a9a9a; }
.vbar { flex-direction: column; padding: 4px 0; }
.vbar svg, .hbar svg { width: 10px; height: 10px; }
.vbar i, .hbar i { background: #cdcdcd; }
.tree .vbar, .tree .rows { grid-row: 1; }
.tree .vbar { z-index: 1; }
.tree .vbar i { width: 17px; height: 348px; margin: 307px 0 auto; }
.down { transform: rotate(180deg); }
.left { transform: rotate(-90deg); }
.right { transform: rotate(90deg); }
.hbar { grid-column: 1 / 3; grid-row: 2; padding: 0 4px; z-index: 1; }
.hbar i { height: 17px; width: 296px; margin: 0 auto 0 4px; }
.hbar .right { margin-right: 16px; }

/* 3D view */
.view { flex: 1; min-width: 0; display: flex; flex-direction: column; border: solid #8c8c8c; border-width: 0 0 1px 1px; padding: 0 3px 4px 2px; }
.toolbar { height: 31px; flex: none; display: flex; align-items: center; gap: 6px; }
.toolbar hr { width: 1px; height: 22px; margin: 0 -1px; border: 0; background: #cfcfcf; }
.toolbar button { width: 20px; height: 20px; flex: none; display: flex; align-items: center; justify-content: center; }
.toolbar svg { width: 16px; height: 16px; }
.toolbar .chev { width: 10px; height: 10px; }
.toolbar .on { background: #bfdff4; border: 1px solid #456a92; }
.toolbar > .drop { margin: 0 -3px 0 -2px; }
.toolbar .drop { width: 26px; }
.toolbar .drops { display: flex; gap: 2px; margin-right: -4px; margin-left: -1px; }
.toolbar .combo { width: 66px; justify-content: space-between; padding-left: 5px; }
.canvas { position: relative; flex: 1; min-height: 0; border-top: 1px solid #54606e; background: linear-gradient(#5b7099, #8496b4 50%, #bac7de); }
.scene { width: 100%; height: 100%; }
.axis-names { font: 15px "Liberation Sans", sans-serif; fill: #333d50; }
.unit { font: 24px "Liberation Serif", serif; fill: #0c1424; }

/* contour plot dialog */
.dialog {
  position: absolute;
  left: 247px;
  top: 108px;
  width: 680px;
  padding: 0 8px 6px 7px;
  background: #f0f0f0;
  border-radius: 8px;
  box-shadow: 0 8px 24px rgba(20, 28, 48, .45), 0 0 2px rgba(20, 28, 48, .5);
}
.dlg-title { display: flex; align-items: center; height: 30px; margin: 0 -8px 0 -7px; padding: 0 2px 0 7px; background: #f9f2ee; border-radius: 8px 8px 0 0; gap: 6px; }
.dlg-title h2 { flex: 1; }
.dlg-title button { width: 40px; height: 30px; display: grid; place-items: center; }
.dlg-title button svg { width: 12px; height: 12px; fill: none; stroke: #333; stroke-width: 1.4; }
.dlg-title button:disabled svg { stroke: #ccc; }
fieldset { margin: 9px 0 0; padding: 2px 6px 6px 8px; border: 1px solid #dde1e1; min-width: 0; }
legend { padding: 0 8px 0 3px; }
.line { display: flex; align-items: center; height: 24px; gap: 6px; }
.line + .line { margin-top: 6px; }
.line label { flex: none; width: 63px; white-space: nowrap; }
.line .inline { width: auto; }
input, select { height: 24px; border: 1px solid #b0b0b0; border-radius: 0; background: #f0f0f0; padding: 0 3px; flex: 1; min-width: 0; width: 0; outline: 0; }
.open { background: #fff; }
.line .short { flex: 0 0 48px; }
.joined { display: flex; flex: 1; }
select {
  appearance: none;
  padding: 0 8px;
  border-color: #a9b3bf;
  background: url("data:image/svg+xml,%3Csvg xmlns='http://www.w3.org/2000/svg' width='8' height='8'%3E%3Cpath d='M1 2l3 3 3-3' fill='none' stroke='%23555' stroke-width='1.300'/%3E%3C/svg%3E") right 4px center no-repeat, linear-gradient(#f2f3f4, #e4e6e8);
}
.sq { flex: none; width: 24px; height: 24px; display: grid; place-items: center; border: 1px solid #7c7c7c; background: #dedede; }
.sq svg { width: 16px; height: 16px; }
.sq:disabled { background: #f4f4f4; border-color: #c0c0c0; }
.faint { opacity: .15; filter: grayscale(1); }
.all { font: 700 11px/16px "Liberation Sans", sans-serif; color: #5c5088; }
.pair { display: grid; grid-template-columns: 372fr 284fr; gap: 9px; margin-top: 1px; }
.pair fieldset { padding-left: 10px; }
.pair legend { padding-left: 1px; }
.pair .line label { width: 96px; }
.tight { gap: 3px; }
.pair .tight label { width: 99px; }
.pair .selection { padding-left: 7px; }
.listrow { display: flex; gap: 6px; margin: 6px 0 7px; }
.listbox { flex: 1; height: 113px; background: #fff; border: 1px solid #a8a8a8; }
.listbox li { height: 21px; line-height: 21px; margin: 1px; padding-left: 13px; background: #f4f4f4; border-bottom: 1px solid #dcdcdc; }
.actions { display: grid; grid-template-columns: 24px 24px; gap: 7px 6px; align-content: start; }
.count { justify-content: space-between; }
.count input { flex: 0 0 75px; margin-right: 60px; }
.extra { display: flex; align-items: center; margin-top: 17px; padding: 8px 6px 7px 12px; border: 1px solid #dde1e1; }
.extra label { width: 100px; }
.extra .sq { margin-left: 6px; }
.extra .sq + label { margin-left: 17px; width: 97px; }
.footer { display: flex; justify-content: flex-end; gap: 6px; margin-top: 6px; }
.push { width: 75px; height: 24px; border: 1px solid #868686; background: #dedede; }
.hot { background: #b9e2f4; border-color: #3c8fb8; }
.pointer { position: absolute; left: 498px; top: 437px; width: 16px; height: 22px; }

/* message log and status bar */
.log { display: flex; height: 119px; flex: none; margin-top: 5px; background: #fff; border-top: 1px solid #9a9a9a; border-bottom: 1px solid #9a9a9a; overflow: hidden; }
.lines { flex: 1; display: flex; flex-direction: column; justify-content: flex-end; overflow: hidden; padding-left: 6px; margin-bottom: -1px; }
.lines p { flex: none; }
.info { color: #2a2ad8; }
.log .vbar { width: 17px; }
.log .vbar i { width: 17px; height: 8px; margin: auto 0 3px; }
.status { display: flex; align-items: center; gap: 12px; height: 28px; flex: none; padding: 0 9px; background: #f1eeed; }
.units { margin-left: auto; }
.badge { position: absolute; right: 13px; bottom: 0; width: 50px; height: 50px; background: rgba(100, 62, 125, .8); }
.badge svg { width: 50px; height: 50px; }
```
